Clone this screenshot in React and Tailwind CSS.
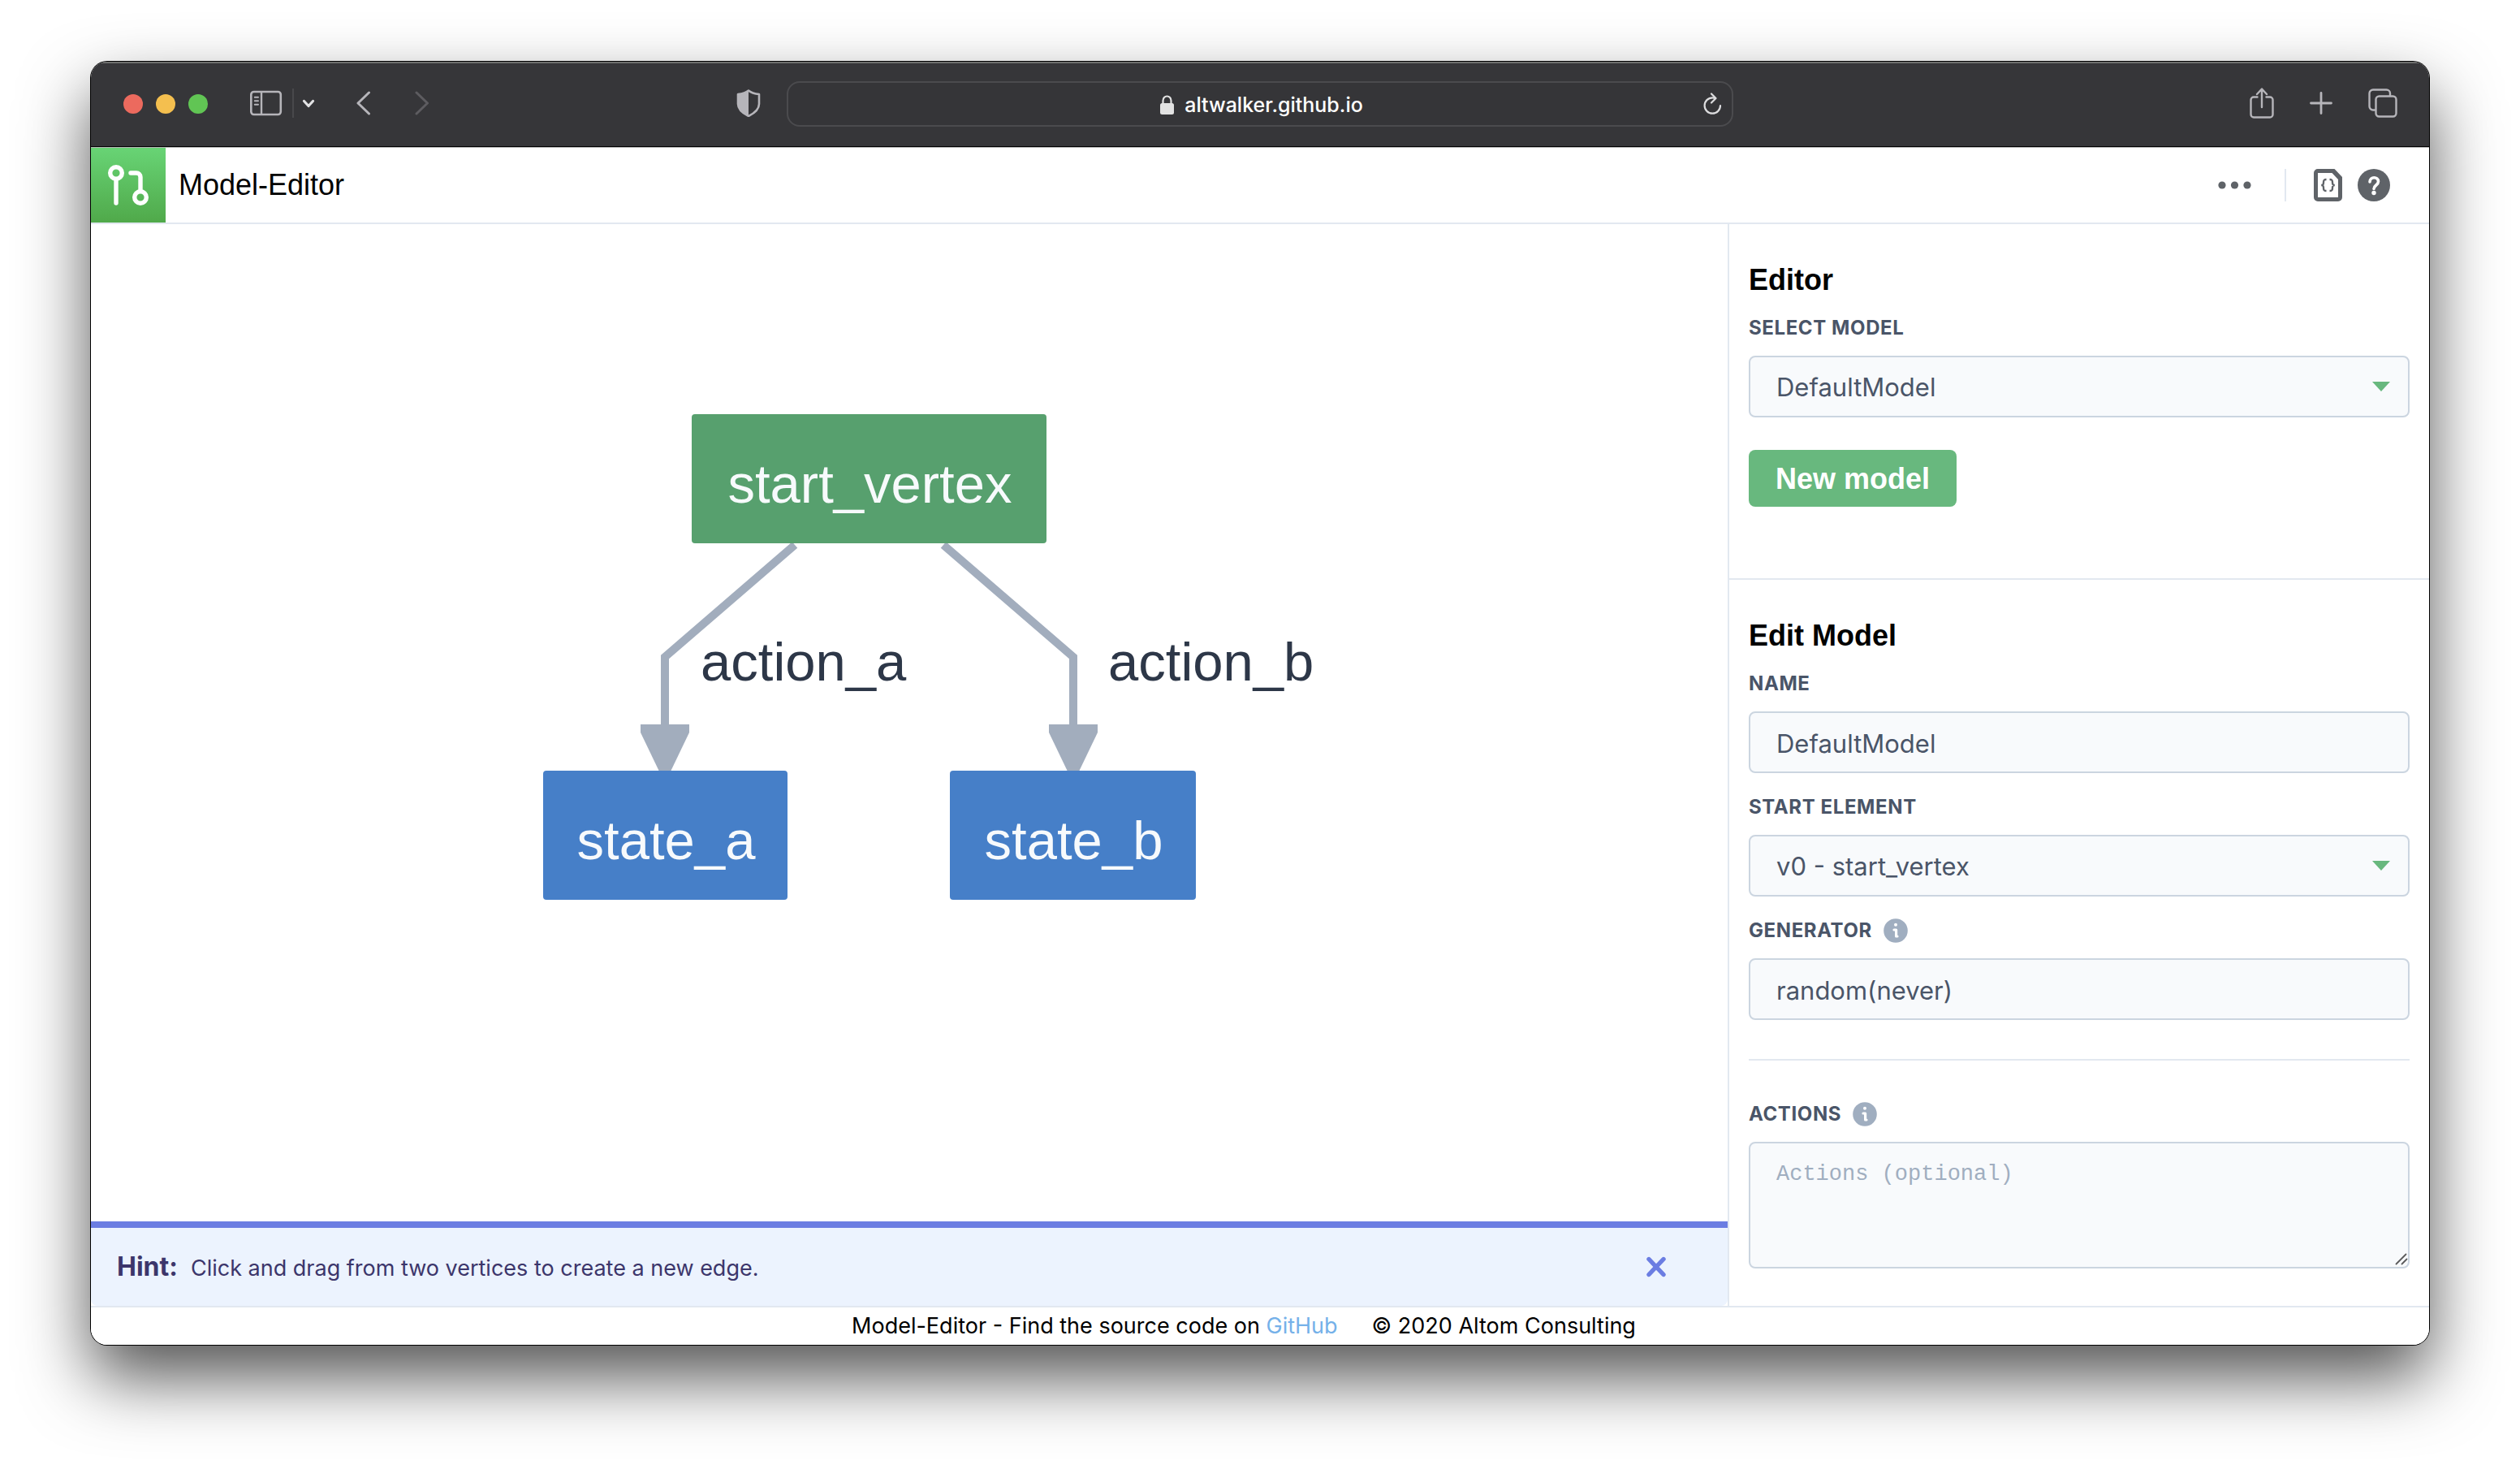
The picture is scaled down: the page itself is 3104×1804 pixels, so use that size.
function InfoIcon() {
  return (
    <svg width="30" height="30" viewBox="0 0 30 30" aria-hidden="true">
      <circle cx="15" cy="15" r="14.800" fill="#a0aec0" />
      <circle cx="15" cy="7.800" r="2" fill="#fff" />
      <path d="M13 14h2.600v8h1.400" fill="none" stroke="#fff" strokeWidth="3.200" strokeLinecap="round" strokeLinejoin="round" />
    </svg>
  );
}

function Label({ htmlFor, children, info }) {
  return (
    <div className="mb-4 flex h-9 items-center gap-3.5">
      <label
        htmlFor={htmlFor}
        className="font-['Inter',sans-serif] text-[24px] font-bold uppercase leading-9 tracking-wide text-[#4a5568]"
      >
        {children}
      </label>
      {info && (
        <button type="button" aria-label={info}>
          <InfoIcon />
        </button>
      )}
    </div>
  );
}

const field =
  "block w-full h-[76px] rounded-lg border-2 border-[#cbd5e0] bg-[#f8fafc] px-8 pt-[2px] font-['Inter',sans-serif] text-[31px] leading-[48px] text-[#4a5568] outline-none";

function SelectField({ id, options }) {
  return (
    <div className="relative">
      <select id={id} className={field + " appearance-none"}>
        {options.map((o) => (
          <option key={o}>{o}</option>
        ))}
      </select>
      <svg
        className="pointer-events-none absolute right-6 top-8"
        width="22"
        height="12"
        viewBox="0 0 22 12"
        aria-hidden="true"
      >
        <path d="M0 0h22L11 12z" fill="#68b87e" />
      </svg>
    </div>
  );
}

function Toolbar() {
  return (
    <div className="flex h-[106px] shrink-0 items-start border-b border-[#b4b4b4] bg-[#363639] shadow-[inset_0_2px_0_#6e6f6e,inset_0_-1px_0_#000]">
      <div className="grid h-[104px] w-full grid-cols-[1fr_1166px_1fr] items-center">
        <div className="flex items-center pl-10">
          <div className="flex gap-4">
            <button type="button" aria-label="Close" className="size-6 rounded-full bg-[#ec6a5e]" />
            <button type="button" aria-label="Minimise" className="size-6 rounded-full bg-[#f4bf4f]" />
            <button type="button" aria-label="Zoom" className="size-6 rounded-full bg-[#61c554]" />
          </div>
          <div className="flex flex-1 items-center pb-[2px]">
            <button type="button" aria-label="Sidebar" className="ml-[52px]">
              <svg width="40" height="32" viewBox="0 0 40 32" fill="none" stroke="#b6b5ba" strokeLinecap="round">
                <rect x="1.300" y="2" width="36.500" height="28" rx="3.500" strokeWidth="2.600" />
                <path d="M14 2.500v27" strokeWidth="2.400" />
                <path d="M5.800 8.700h4.200M5.800 13.200h4.200M5.800 17.700h4.200" strokeWidth="2" />
              </svg>
            </button>
            <span className="ml-3 h-9 w-[2px] bg-[#48484b]" />
            <button type="button" aria-label="Sidebar menu" className="ml-[10px]">
              <svg width="16" height="12" viewBox="0 0 16 12" fill="none" stroke="#e2e2e4" strokeWidth="3.200" strokeLinecap="round" strokeLinejoin="round">
                <path d="M2.500 3.500l5.500 6l5.500-6" />
              </svg>
            </button>
            <button type="button" aria-label="Back" className="ml-[51px]">
              <svg width="18" height="30" viewBox="0 0 18 30" fill="none" stroke="#b6b5ba" strokeWidth="3" strokeLinecap="round" strokeLinejoin="round">
                <path d="M15.500 2L2 15l13.500 13" />
              </svg>
            </button>
            <button type="button" aria-label="Forward" className="ml-[54px]">
              <svg width="18" height="30" viewBox="0 0 18 30" fill="none" stroke="#5d5c60" strokeWidth="3" strokeLinecap="round" strokeLinejoin="round">
                <path d="M2 2l13.500 13L2 28" />
              </svg>
            </button>
            <button type="button" aria-label="Privacy report" className="ml-auto mr-8">
              <svg width="30" height="34" viewBox="0 0 30 34">
                <path d="M15 1.500C18 4 23 5.500 28 6v12c0 7-6 11.500-13 15C8 29.500 2 25 2 18V6c5-.5 10-2 13-4.500z" fill="none" stroke="#b6b5ba" strokeWidth="2.600" strokeLinejoin="round" />
                <path d="M15 1.500v31.500C8 29.500 2 25 2 18V6c5-.5 10-2 13-4.500z" fill="#b6b5ba" />
              </svg>
            </button>
          </div>
        </div>
        <div className="flex h-14 items-center rounded-[16px] border-2 border-[#4b4b4e] bg-[#353538] px-3">
          <span className="w-7" />
          <div className="flex flex-1 items-center justify-center gap-3 pt-[2px]">
            <svg width="18" height="24" viewBox="0 0 18 24">
              <rect x="0" y="10" width="17" height="14" rx="2.500" fill="#e2e2e2" />
              <path d="M3.500 11V7a5 5.500 0 0110 0v4" fill="none" stroke="#e2e2e2" strokeWidth="2.200" />
            </svg>
            <span className="font-['Inter',sans-serif] text-[25px] font-medium leading-8 text-white">altwalker.github.io</span>
          </div>
          <button type="button" aria-label="Reload">
            <svg width="24" height="28" viewBox="0 0 24 28" fill="none" stroke="#dcdcde" strokeWidth="2.200" strokeLinecap="round" strokeLinejoin="round">
              <path d="M22 16a9.700 9.700 0 11-9.700-9.700c1.500 0 2.500.2 3.500.7" />
              <path d="M11 1.500l5.500 5.500l-5.500 5.500" />
            </svg>
          </button>
        </div>
        <div className="flex items-center justify-end gap-11 pb-[3px] pr-[39px]">
          <button type="button" aria-label="Share">
            <svg width="30" height="38" viewBox="0 0 30 38" fill="none" stroke="#b6b5ba" strokeWidth="2.400" strokeLinecap="round" strokeLinejoin="round">
              <path d="M9.500 11.500H5A3.500 3.500 0 001.500 15v18A3.500 3.500 0 005 36.500h20a3.500 3.500 0 003.500-3.500V15a3.500 3.500 0 00-3.500-3.500h-4.500M15 24V2.500M9 8l6-6.500L21 8" />
            </svg>
          </button>
          <button type="button" aria-label="New tab">
            <svg width="28" height="28" viewBox="0 0 28 28" fill="none" stroke="#b6b5ba" strokeWidth="2.800" strokeLinecap="round">
              <path d="M14 1.500v25M1.500 14h25" />
            </svg>
          </button>
          <button type="button" aria-label="Tab overview">
            <svg width="36" height="36" viewBox="0 0 36 36" fill="none" stroke="#b6b5ba" strokeWidth="2.400" strokeLinejoin="round">
              <rect x="9.500" y="9.500" width="25" height="25" rx="4" />
              <path d="M9.500 26.500H6a4.500 4.500 0 01-4.500-4.500V6A4.500 4.500 0 016 1.500h16.500A4.500 4.500 0 0127 6v3.500" />
            </svg>
          </button>
        </div>
      </div>
    </div>
  );
}

function Header() {
  return (
    <header className="flex h-[94px] shrink-0 items-center border-b-2 border-[#e2e8f0] bg-white">
      <div className="size-[92px] bg-linear-to-b from-[#68d475] to-[#50a94a]">
        <svg width="92" height="92" viewBox="0 0 92 92" fill="none" stroke="#fff" strokeWidth="5.400" strokeLinecap="round" aria-hidden="true">
          <circle cx="31" cy="31" r="7.300" />
          <path d="M31 39v29" />
          <circle cx="61" cy="61" r="7.300" />
          <path d="M49 31h7a5 5 0 015 5v17" />
        </svg>
      </div>
      <h1 className="ml-4 font-['Liberation_Sans',Arial,sans-serif] text-[36px] leading-[54px] text-black">Model-Editor</h1>
      <div className="ml-auto flex items-center pr-12">
        <button type="button" aria-label="More">
          <svg width="42" height="12" viewBox="0 0 42 12" fill="#5f6368">
            <circle cx="5" cy="6" r="4.600" />
            <circle cx="20.500" cy="6" r="4.600" />
            <circle cx="36" cy="6" r="4.600" />
          </svg>
        </button>
        <span className="ml-10 h-10 w-[2px] bg-[#e2e8f0]" />
        <button type="button" aria-label="View JSON" className="ml-[34px]">
          <svg width="36" height="40" viewBox="0 0 36 40">
            <path
              d="M5 0h20.500L35 10v25a5 5 0 01-5 5H5a5 5 0 01-5-5V5a5 5 0 015-5zM5 5v30h25V13l-7.500-8z"
              fill="#5f6368"
              fillRule="evenodd"
            />
            <path
              d="M15.500 13c-3 0-3.500.8-3.500 3.500s-.6 3.500-2.800 3.500c2.200 0 2.800.8 2.800 3.500s.5 3.500 3.500 3.500M19.500 13c3 0 3.500.8 3.500 3.500s.6 3.500 2.800 3.500c-2.200 0-2.800.8-2.800 3.500s-.5 3.500-3.500 3.500"
              fill="none"
              stroke="#5f6368"
              strokeWidth="2.400"
            />
          </svg>
        </button>
        <button type="button" aria-label="Help" className="ml-[18px]">
          <svg width="40" height="40" viewBox="0 0 40 40">
            <circle cx="20" cy="20" r="20" fill="#5f6368" />
            <path d="M15 16c0-7 10.500-7 10.500-.5 0 4.500-5.500 4.500-5.500 9" fill="none" stroke="#fff" strokeWidth="3.600" strokeLinecap="round" />
            <circle cx="20" cy="29.500" r="2.700" fill="#fff" />
          </svg>
        </button>
      </div>
    </header>
  );
}

const nodes = [
  { id: "start_vertex", x: 740, y: 234, w: 437, fill: "#57a06e" },
  { id: "state_a", x: 557, y: 673, w: 301, fill: "#467fc8" },
  { id: "state_b", x: 1058, y: 673, w: 303, fill: "#467fc8" },
];

const edges = [
  { id: "action_a", d: "M867 395L707 533V620", ax: 707, tx: 751 },
  { id: "action_b", d: "M1050 395L1210 533V620", ax: 1210, tx: 1253 },
];

function Diagram() {
  return (
    <svg
      viewBox="0 0 2016 1228"
      className="block min-h-0 w-full flex-1 font-['Liberation_Sans',Arial,sans-serif] text-[67px]"
      role="img"
      aria-label="Model graph"
    >
      {edges.map((e) => (
        <g key={e.id}>
          <path d={e.d} fill="none" stroke="#a2adbd" strokeWidth="10" />
          <path d={`M${e.ax - 30} 616h60v10l-24 50h-12l-24-50z`} fill="#a2adbd" />
          <text x={e.tx} y="562" fill="#2d3748">
            {e.id}
          </text>
        </g>
      ))}
      {nodes.map((n) => (
        <g key={n.id}>
          <rect x={n.x} y={n.y} width={n.w} height="159" rx="4" fill={n.fill} />
          <text x={n.x + n.w / 2 + 1} y={n.y + 109} textAnchor="middle" fill="#f7fafc">
            {n.id}
          </text>
        </g>
      ))}
    </svg>
  );
}

function Hint() {
  return (
    <div className="flex h-[104px] shrink-0 items-center rounded-b-lg border-t-8 border-[#6b7de2] bg-[#ecf3fe] pl-8 font-['Inter',sans-serif] text-[#3c366b]">
      <p className="flex items-baseline gap-4 pt-[2px] leading-[48px]">
        <strong className="text-[32px] font-bold">Hint:</strong>
        <span className="text-[27px]">Click and drag from two vertices to create a new edge.</span>
      </p>
      <button type="button" aria-label="Dismiss" className="ml-auto mr-[76px]">
        <svg width="24" height="26" viewBox="0 0 24 26" stroke="#6b7de2" strokeWidth="5.400" strokeLinecap="round">
          <path d="M3 3.500l18 19M21 3.500L3 22.500" />
        </svg>
      </button>
    </div>
  );
}

function PanelTitle({ children }) {
  return (
    <h2 className="mb-3.5 font-['Liberation_Sans',Arial,sans-serif] text-[36px] font-bold leading-[54px] text-black">
      {children}
    </h2>
  );
}

function Sidebar() {
  return (
    <aside className="flex w-[30%] shrink-0 flex-col border-l-2 border-[#e2e8f0] bg-white">
      <section className="border-b-2 border-[#e2e8f0] px-6 pb-[88px] pt-[42px]">
        <PanelTitle>Editor</PanelTitle>
        <Label htmlFor="model">Select model</Label>
        <SelectField id="model" options={["DefaultModel"]} />
        <button
          type="button"
          className="mt-10 block h-[70px] rounded-lg bg-[#68b87e] px-[33px] pt-[2px] font-['Liberation_Sans',Arial,sans-serif] text-[36px] font-bold leading-[54px] text-white"
        >
          New model
        </button>
      </section>
      <section className="px-6 pt-[42px]">
        <PanelTitle>Edit Model</PanelTitle>
        <div className="flex flex-col gap-6">
          <div>
            <Label htmlFor="name">Name</Label>
            <input id="name" type="text" defaultValue="DefaultModel" className={field} />
          </div>
          <div>
            <Label htmlFor="start">Start element</Label>
            <SelectField id="start" options={["v0 - start_vertex"]} />
          </div>
          <div>
            <Label htmlFor="generator" info="About generators">Generator</Label>
            <input id="generator" type="text" defaultValue="random(never)" className={field} />
          </div>
        </div>
        <hr className="my-12 border-t-2 border-[#e2e8f0]" />
        <Label htmlFor="actions" info="About actions">Actions</Label>
        <div className="relative">
          <textarea
            id="actions"
            placeholder="Actions (optional)"
            className="block h-[156px] w-full resize-none rounded-lg border-2 border-[#cbd5e0] bg-[#f8fafc] px-8 py-3.5 font-['Liberation_Mono',monospace] text-[27px] leading-[48px] text-[#4a5568] outline-none placeholder:text-[#a0aec0]"
          />
          <svg className="pointer-events-none absolute bottom-1 right-[2px]" width="16" height="16" viewBox="0 0 16 16" stroke="#5c5c5c" strokeWidth="1.800" strokeLinecap="round" aria-hidden="true">
            <path d="M1.500 14.500l12-12M8.500 14.500l6-6" />
          </svg>
        </div>
      </section>
    </aside>
  );
}

export default function App() {
  return (
    <div className="flex min-h-screen flex-col bg-white px-28 pb-[148px] pt-[76px]">
      <div className="flex flex-1 flex-col overflow-hidden rounded-[20px] bg-white shadow-[0_0_0_1px_#000,0_40px_84px_rgba(0,0,0,0.68)]">
        <Toolbar />
        <Header />
        <div className="flex flex-1">
          <main className="flex min-w-0 flex-1 flex-col">
            <Diagram />
            <Hint />
          </main>
          <Sidebar />
        </div>
        <footer className="flex h-12 shrink-0 items-center justify-center gap-[42px] border-t-2 border-[#e2e8f0] bg-white pr-10 font-['Inter',sans-serif] text-[27px] leading-[42px] text-black">
          <span>
            Model-Editor - Find the source code on{" "}
            <a href="#github" className="text-[#75b1e9]">GitHub</a>
          </span>
          <span>© 2020 Altom Consulting</span>
        </footer>
      </div>
    </div>
  );
}
